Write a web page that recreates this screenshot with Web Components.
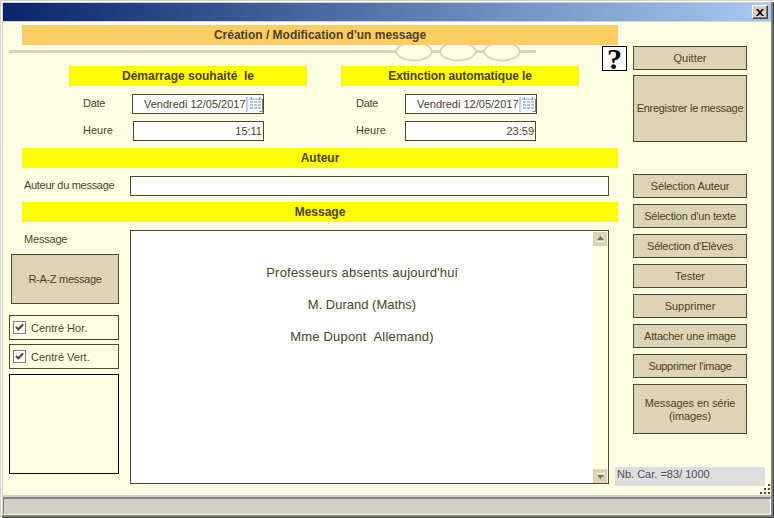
<!DOCTYPE html>
<html lang="fr"><head><meta charset="utf-8"><style>
html,body{margin:0;padding:0;background:#d4d0c8}
body{font:11px "Liberation Sans",Arial,sans-serif;color:#4f3f1f}
</style></head><body>
<app-window></app-window>
<script>
function def(name,css,html){
  customElements.define(name,class extends HTMLElement{
    connectedCallback(){
      if(this.shadowRoot)return;
      const r=this.attachShadow({mode:'open'});
      r.innerHTML='<style>'+css+'</style>'+html;
    }
  });
}
const calIcon=`<svg width="17" height="17" viewBox="0 0 17 17"><rect x="0" y="1" width="2" height="15" fill="#b9d3ee"/><rect x="3" y="3" width="13" height="12" fill="#fff"/><rect x="3" y="2" width="13" height="2" fill="#c8d4e4"/><path d="M5.5 1v3M13.5 1v3" stroke="#8a8a8a"/><g fill="#a9c4e6"><rect x="4" y="5" width="3" height="2"/><rect x="8" y="5" width="3" height="2"/><rect x="12" y="5" width="3" height="2"/><rect x="4" y="8" width="3" height="2"/><rect x="8" y="8" width="3" height="2"/><rect x="12" y="8" width="3" height="2"/><rect x="4" y="11" width="3" height="2"/><rect x="8" y="11" width="3" height="2"/><rect x="12" y="11" width="3" height="2"/></g><path d="M16.5 3v12.5h-3" stroke="#6f7f95" fill="none"/></svg>`;

def('win-title',`:host{display:flex;height:18px;justify-content:flex-end;align-items:center;padding:0 3px 0 0;background:linear-gradient(90deg,#0a246a,#a6caf0)}
.x{box-sizing:border-box;width:16px;height:14px;background:#d4d0c8;border:1px solid;border-color:#fff #404040 #404040 #fff;box-shadow:inset -1px -1px #808080;display:flex;align-items:center;justify-content:center}`,
`<div class="x"><svg width="8" height="7" viewBox="0 0 8 7"><path d="M0 0h2l2 2 2-2h2L5 3.5 8 7H6L4 5 2 7H0l3-3.5z" fill="#000"/></svg></div>`);

def('band-head',`:host{display:flex;align-items:center;justify-content:center;height:20px;background:#ffff00;font-weight:bold;font-size:12px;color:#4f3f1f;box-sizing:border-box;white-space:pre}
:host([orange]){background:#ffcc66}`,`<slot></slot>`);

def('date-box',`:host{display:flex;align-items:center;box-sizing:border-box;height:20px;background:#fff;border:1px solid #554826;padding-left:11px;white-space:nowrap;overflow:hidden;width:132px}
span{flex:1;color:#4f3f1f}svg{flex:none;display:block}`,
`<span><slot></slot></span>`+calIcon);

def('time-box',`:host{display:flex;align-items:center;justify-content:flex-end;box-sizing:border-box;height:20px;background:#fff;border:1px solid #554826;padding-right:1px}`,`<slot></slot>`);

def('win-btn',`:host{display:flex;align-items:center;justify-content:center;text-align:center;box-sizing:border-box;width:114px;height:24px;background:#ddd4b8;border:1px solid #554826;color:#4f3f1f;line-height:13px;white-space:nowrap}`,`<slot></slot>`);

def('check-box',`:host{display:flex;align-items:center;box-sizing:border-box;width:110px;height:25px;border:1px solid #554826;padding-left:3px;gap:5px}
.c{box-sizing:border-box;width:13px;height:13px;background:#fff;border:1px solid #808080;display:flex;align-items:center;justify-content:center}`,
`<div class="c"><svg width="9" height="9" viewBox="0 0 9 9"><path d="M1 4l2.3 2.4L8 1.5" fill="none" stroke="#4f3f1f" stroke-width="2"/></svg></div><slot></slot>`);

def('memo-box',`:host{display:flex;box-sizing:border-box;height:254px;width:479px;border:1px solid #554826;background:#ffffe6}
.t{flex:1;background:#fff;display:flex;flex-direction:column;align-items:center;padding-top:35px;font-size:13px;white-space:pre;color:#4f3f1f}
::slotted(p){margin:0;height:32px;line-height:14px}
.s{flex:none;width:15px;display:flex;flex-direction:column;justify-content:space-between;padding-top:1px}
.a{width:14px;height:14px;background:#ddd4b8;display:flex;align-items:center;justify-content:center}
.a svg{display:block}`,
`<div class="t"><slot></slot></div><div class="s"><div class="a"><svg width="9" height="6" viewBox="0 0 9 6"><path d="M4.5 0L8 4H1z" fill="#7a7259"/><path d="M0 5.5h9" stroke="#fff" stroke-opacity=".8"/></svg></div><div class="a"><svg width="9" height="6" viewBox="0 0 9 6"><path d="M0 .5h9" stroke="#fff" stroke-opacity=".8"/><path d="M1 2h7L4.5 6z" fill="#7a7259"/></svg></div></div>`);

def('help-btn',`:host{display:flex;align-items:center;justify-content:center;box-sizing:border-box;width:25px;height:25px;background:#fff;border:1px solid #000;font:bold 30px/23px "Liberation Serif",serif;color:#000;flex:none}`,`<slot></slot>`);

def('app-window',`:host{display:block;width:774px;height:518px;box-sizing:border-box;padding:3px;overflow:hidden;position:relative;background:#d4d0c8;box-shadow:inset 1px 1px #d4d0c8,inset 2px 2px #fff,inset -1px -1px #404040,inset -3px -3px #808080}
.client{height:473px;margin-top:1px;background:#ffffe6;display:flex;position:relative}
.left{width:630px;flex:none;display:flex;flex-direction:column;padding-top:3px;box-sizing:border-box}
.band{margin:0 15px 0 19px}
.deco{display:flex;height:21px;padding-left:6px}
.deco svg{display:block;flex:none}
.deco help-btn{margin:1px 0 0 66px}
.two{display:flex;padding-left:66px;gap:34px}
.col{width:238px}
.f{display:grid;grid-template-columns:49px 132px;grid-template-rows:20px 20px;row-gap:7px;padding:8px 0 0 14px;align-items:center}
.f span{padding-bottom:2px}
.f.b{padding-left:15px;grid-template-columns:49px 131px}
.f time-box{margin-left:1px}
.f.b time-box{margin-left:0}
.a1{margin-top:7px}
.auth{display:flex;align-items:center;height:20px;margin:8px 0 6px 21px}
.auth span{width:106px;padding-bottom:2px;letter-spacing:-.3px}
.auth .inp{box-sizing:border-box;width:479px;height:20px;background:#fff;border:1px solid #554826}
.msg{display:flex;margin:8px 0 0 6px}
.side{width:121px;flex:none;display:flex;flex-direction:column}
.side .lbl{height:24px;padding:3px 0 0 15px;box-sizing:border-box;letter-spacing:-.2px}
.raz{width:108px;height:50px;margin-left:2px;letter-spacing:-.3px}
.side check-box{margin-top:4px}
.side .raz + check-box{margin-top:11px}
.pic{box-sizing:border-box;width:110px;height:100px;border:1px solid #000;margin-top:5px}
.right{flex:1;display:flex;flex-direction:column;padding-top:24px;box-sizing:border-box}
.right win-btn{margin-top:6px}
.right win-btn:first-child{margin-top:0}
.right win-btn.big{height:67px;margin-top:5px;letter-spacing:-.3px}
.right win-btn.gap{margin-top:32px;letter-spacing:-.1px}
.right win-btn.multi{height:50px;padding-top:2px;letter-spacing:-.1px}
.right win-btn.tight{letter-spacing:-.2px}
.right win-btn.tighter{letter-spacing:-.3px}
.nb{margin:auto 0 9px -18px;width:150px;height:19px;background:#dedede;box-sizing:border-box;padding:0 2px;color:#4f4f5f;line-height:14px}
.grip{position:absolute;right:0;bottom:0}
.status{height:18px;margin-top:2px;box-sizing:border-box;background:#d4d0c8;border-top:2px solid #808080;border-left:1px solid #808080;border-bottom:1px solid #fff;border-right:1px solid #fff}
`,`<win-title></win-title>
<div class="client">
 <div class="left">
  <band-head orange class="band">Création / Modification d'un message</band-head>
  <div class="deco"><svg width="527" height="17" viewBox="0 0 527 17"><path d="M0 6.5H387M423 6.5h8M467 6.5h8M511 6.5h16" stroke="#ddd4b8" stroke-width="3" fill="none"/><g fill="none" stroke="#ddd4b8" stroke-width="2"><ellipse cx="405" cy="6.5" rx="17.5" ry="9"/><ellipse cx="449" cy="6.5" rx="17.5" ry="9"/><ellipse cx="493" cy="6.5" rx="17.5" ry="9"/></g></svg><help-btn>?</help-btn></div>
  <div class="two">
   <div class="col"><band-head>Démarrage souhaité  le</band-head>
    <div class="f"><span style="letter-spacing:-.3px">Date</span><date-box>Vendredi 12/05/2017</date-box><span>Heure</span><time-box>15:11</time-box></div></div>
   <div class="col"><band-head style="letter-spacing:-.1px">Extinction automatique le</band-head>
    <div class="f b"><span style="letter-spacing:-.3px">Date</span><date-box>Vendredi 12/05/2017</date-box><span>Heure</span><time-box>23:59</time-box></div></div>
  </div>
  <band-head class="band a1">Auteur</band-head>
  <div class="auth"><span>Auteur du message</span><div class="inp"></div></div>
  <band-head class="band">Message</band-head>
  <div class="msg">
   <div class="side"><div class="lbl">Message</div>
    <win-btn class="raz">R-A-Z message</win-btn>
    <check-box>Centré Hor.</check-box><check-box>Centré Vert.</check-box><div class="pic"></div></div>
   <memo-box><p style="letter-spacing:.2px">Professeurs absents aujourd'hui</p><p>M. Durand (Maths)</p><p style="letter-spacing:.2px">Mme Dupont  Allemand)</p></memo-box>
  </div>
 </div>
 <div class="right">
  <win-btn>Quitter</win-btn>
  <win-btn class="big">Enregistrer le message</win-btn>
  <win-btn class="gap">Sélection Auteur</win-btn>
  <win-btn class="tight">Sélection d'un texte</win-btn>
  <win-btn class="tight">Sélection d'Elèves</win-btn>
  <win-btn>Tester</win-btn>
  <win-btn>Supprimer</win-btn>
  <win-btn class="tight">Attacher une image</win-btn>
  <win-btn class="tighter">Supprimer l'image</win-btn>
  <win-btn class="multi">Messages en série<br>(images)</win-btn>
  <div class="nb">Nb. Car. =83/ 1000</div>
 </div>
 <svg class="grip" width="12" height="12" viewBox="0 0 12 12" fill="#554826"><rect x="9" y="1" width="2" height="2"/><rect x="5" y="5" width="2" height="2"/><rect x="9" y="5" width="2" height="2"/><rect x="1" y="9" width="2" height="2"/><rect x="5" y="9" width="2" height="2"/><rect x="9" y="9" width="2" height="2"/></svg>
</div>
<div class="status"></div>`);
</script>
</body></html>
